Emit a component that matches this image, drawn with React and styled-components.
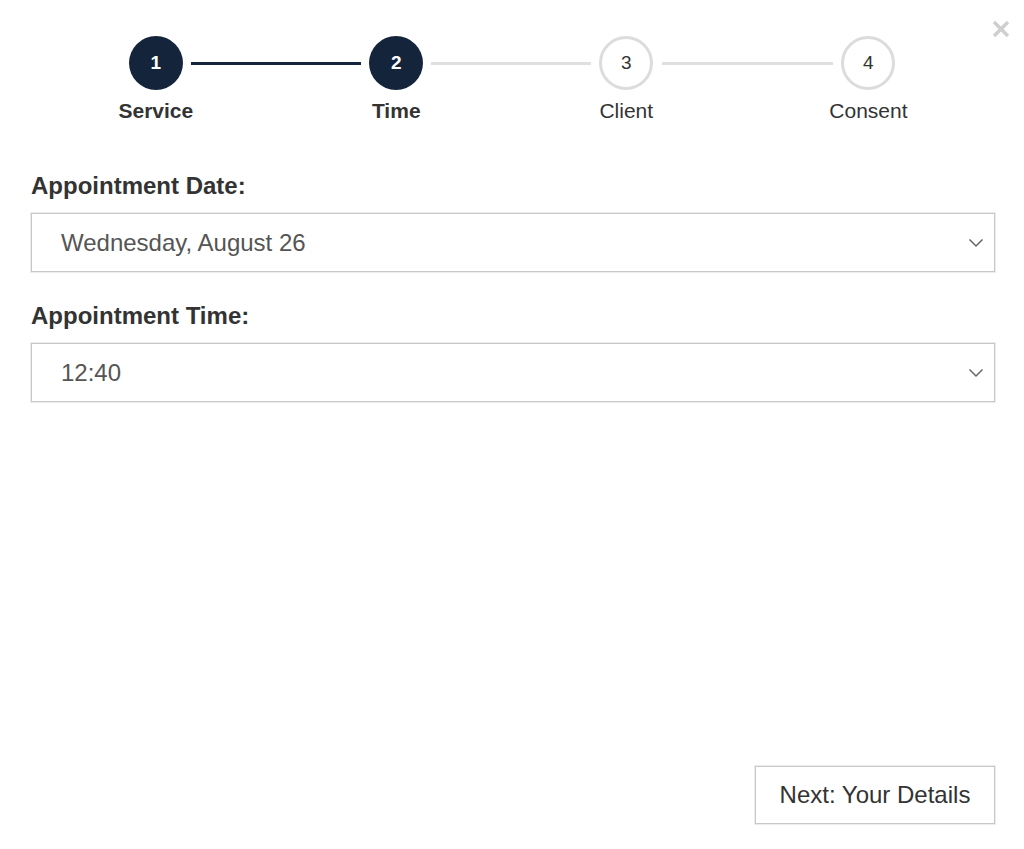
import React from "react";
import styled, { createGlobalStyle } from "styled-components";

const GlobalStyle = createGlobalStyle`
    body{
        margin:0;
        background:#fff;
        font-family:"Liberation Sans", Arial, sans-serif;
    }
`;

const Page = styled.div`
    position:relative;
    box-sizing:border-box;
    width:1024px;
    height:849px;
    padding:36px 29px 0 31px;
    display:flex;
    flex-direction:column;
`;

const Close = styled.button`
    position:absolute;
    top:20px;
    right:14px;
    width:18px;
    height:18px;
    padding:0;
    border:none;
    background:none;
    cursor:pointer;
`;

const Steps = styled.div`
    width:789px;
    margin:0 auto;
    display:grid;
    grid-template-columns:auto 1fr auto 1fr auto 1fr auto;
    align-items:start;
`;

const Step = styled.div`
    display:flex;
    flex-direction:column;
    align-items:center;
    gap:9px;
`;

const Circle = styled.div`
    box-sizing:border-box;
    width:54px;
    height:54px;
    border-radius:50%;
    display:flex;
    align-items:center;
    justify-content:center;
    font-size:19px;
    background:${p => p.$active ? "#14243a" : "#fff"};
    color:${p => p.$active ? "#fff" : "#333"};
    border:${p => p.$active ? "none" : "3px solid #dcdcdc"};
    font-weight:${p => p.$active ? "bold" : "normal"};
`;

const StepLabel = styled.div`
    font-size:21px;
    line-height:24px;
    color:#333;
    white-space:nowrap;
    font-weight:${p => p.$active ? "bold" : "normal"};
`;

const Line = styled.div`
    height:3px;
    margin-top:26px;
    margin-left:${p => p.$l}px;
    margin-right:${p => p.$r}px;
    background:${p => p.$active ? "#14243a" : "#e0e0e0"};
`;

const Field = styled.div`
    display:flex;
    flex-direction:column;
    margin-top:${p => p.$top}px;
`;

const Label = styled.label`
    font-size:24px;
    font-weight:bold;
    color:#333;
    line-height:28px;
    margin-bottom:13px;
`;

const Select = styled.div`
    box-sizing:border-box;
    height:59px;
    border:1px solid #c8c8c8;
    box-shadow:0 0 0 1px #ececec;
    display:flex;
    align-items:center;
    justify-content:space-between;
    padding:0 10px 0 29px;
    font-size:24px;
    color:#555;
`;

const Footer = styled.div`
    margin-top:auto;
    margin-bottom:25px;
    display:flex;
    justify-content:flex-end;
`;

const Button = styled.button`
    box-sizing:border-box;
    width:240px;
    height:58px;
    border:1px solid #c8c8c8;
    box-shadow:0 0 0 1px #ececec;
    background:#fff;
    font-family:inherit;
    font-size:24px;
    color:#333;
    cursor:pointer;
`;

const Chevron = () => (
    <svg width="16" height="10" viewBox="0 0 16 10">
        <path d="M1.5 1.5 L8 8 L14.5 1.5" fill="none" stroke="#666" strokeWidth="1.5" />
    </svg>
);

const steps = [
    { n: 1, label: "Service", active: true },
    { n: 2, label: "Time", active: true },
    { n: 3, label: "Client" },
    { n: 4, label: "Consent" },
];
const lines = [
    { l: -2, r: 8, active: true },
    { l: 8, r: 8 },
    { l: 9, r: -4 },
];

const Stepper = () => (
    <Steps>
        {steps.map((s, i) => (
            <React.Fragment key={s.n}>
                <Step>
                    <Circle $active={s.active}>{s.n}</Circle>
                    <StepLabel $active={s.active}>{s.label}</StepLabel>
                </Step>
                {lines[i] && <Line $l={lines[i].l} $r={lines[i].r} $active={lines[i].active} />}
            </React.Fragment>
        ))}
    </Steps>
);

export default function App(){
    return(
        <>
            <GlobalStyle />
            <Page>
                <Close aria-label="close">
                    <svg width="18" height="18" viewBox="0 0 18 18">
                        <path d="M2 2 L16 16 M16 2 L2 16" stroke="#cfcfcf" strokeWidth="3.5" />
                    </svg>
                </Close>
                <Stepper />
                <Field $top={49}>
                    <Label>Appointment Date:</Label>
                    <Select>Wednesday, August 26<Chevron /></Select>
                </Field>
                <Field $top={30}>
                    <Label>Appointment Time:</Label>
                    <Select>12:40<Chevron /></Select>
                </Field>
                <Footer>
                    <Button>Next: Your Details</Button>
                </Footer>
            </Page>
        </>
    )
}
